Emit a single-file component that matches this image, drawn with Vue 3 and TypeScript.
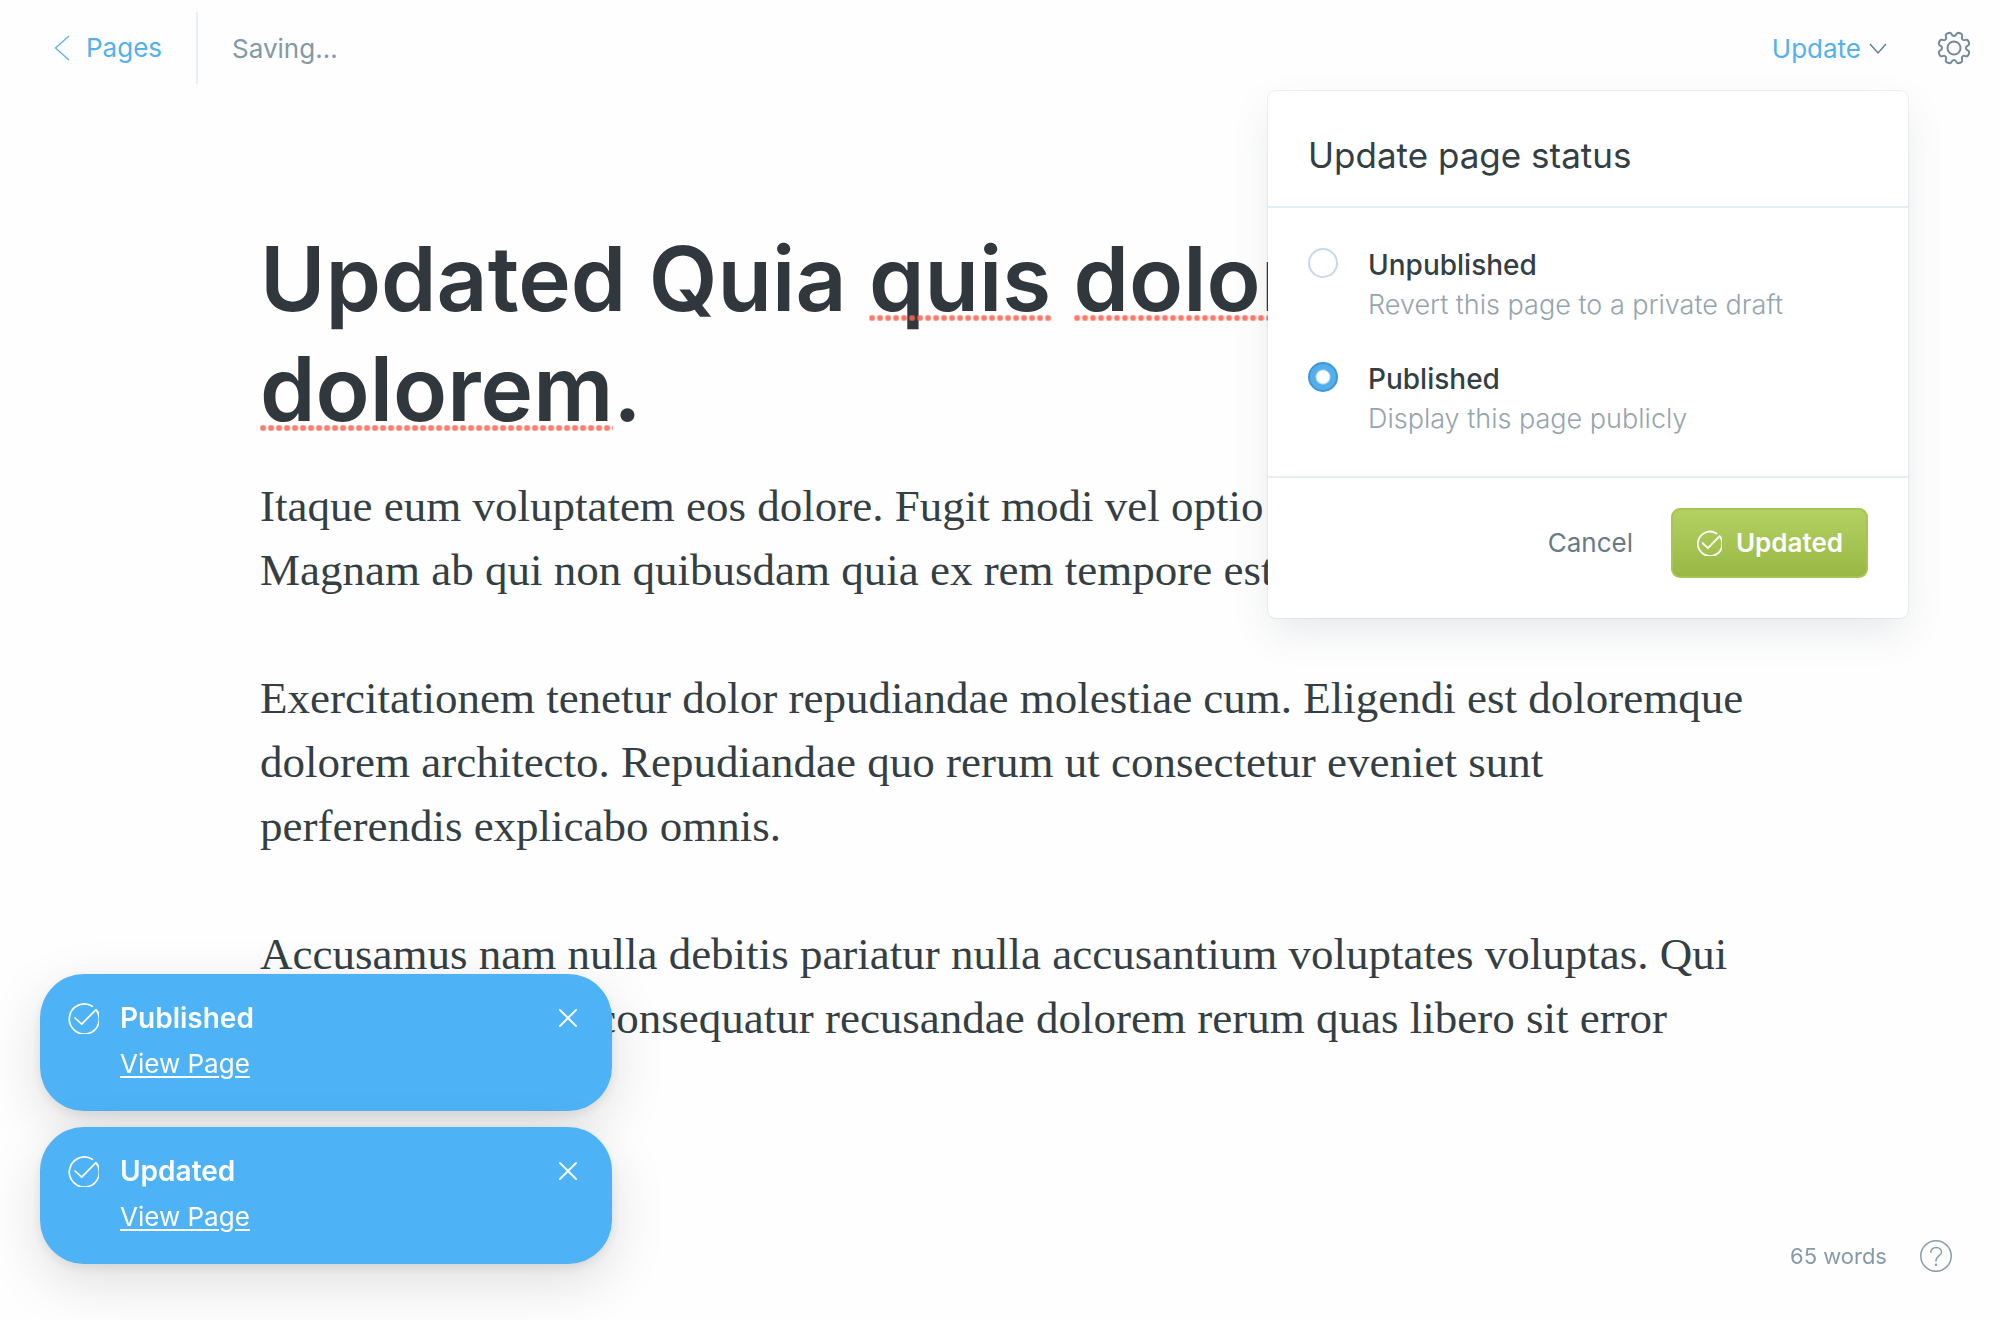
<script setup lang="ts">
import { ref } from 'vue'

interface StatusOption {
  value: string
  label: string
  hint: string
}

interface Toast {
  id: number
  title: string
}

const status = ref('published')

const options: StatusOption[] = [
  { value: 'unpublished', label: 'Unpublished', hint: 'Revert this page to a private draft' },
  { value: 'published', label: 'Published', hint: 'Display this page publicly' },
]

const toasts = ref<Toast[]>([
  { id: 1, title: 'Published' },
  { id: 2, title: 'Updated' },
])

const paragraphs: string[] = [
  'Itaque eum voluptatem eos dolore. Fugit modi vel optio aut.\nMagnam ab qui non quibusdam quia ex rem tempore est.',
  'Exercitationem tenetur dolor repudiandae molestiae cum. Eligendi est doloremque\ndolorem architecto. Repudiandae quo rerum ut consectetur eveniet sunt\nperferendis explicabo omnis.',
  'Accusamus nam nulla debitis pariatur nulla accusantium voluptates voluptas. Qui\nvoluptas nihil quo consequatur recusandae dolorem rerum quas libero sit error',
]

function dismiss(id: number): void {
  toasts.value = toasts.value.filter((t) => t.id !== id)
}

/* Eight-toothed cog outline, smoothed through the midpoints of its control points. */
function cogPath(): string {
  const pts: [number, number][] = []
  const at = (deg: number, r: number): [number, number] => {
    const a = (deg * Math.PI) / 180
    return [16 + r * Math.sin(a), 16 - r * Math.cos(a)]
  }
  for (let k = 0; k < 8; k++) {
    const mid = 22.5 + 45 * k
    pts.push(at(mid - 11, 15.6), at(mid - 3, 16), at(mid + 3, 16), at(mid + 11, 15.6))
    pts.push(at(mid + 15, 12.4), at(mid + 22.5, 12), at(mid + 30, 12.4))
  }
  const half = (a: [number, number], b: [number, number]) =>
    `${((a[0] + b[0]) / 2).toFixed(2)} ${((a[1] + b[1]) / 2).toFixed(2)}`
  let d = `M${half(pts[pts.length - 1], pts[0])}`
  pts.forEach((p, i) => {
    d += `Q${p[0].toFixed(2)} ${p[1].toFixed(2)} ${half(p, pts[(i + 1) % pts.length])}`
  })
  return d + 'Z'
}

const cog = cogPath()
</script>

<template>
  <div class="editor">
    <header class="bar">
      <nav class="bar-left">
        <a class="back" href="#pages">
          <svg width="16" height="26" viewBox="0 0 16 26" aria-hidden="true">
            <path d="M15 1 1.500 13 15 25" fill="none" stroke="currentColor" stroke-width="1.300" />
          </svg>
          <span>Pages</span>
        </a>
        <span class="saving">Saving...</span>
      </nav>
      <div class="bar-right">
        <div class="publish">
          <button class="trigger" type="button" aria-haspopup="dialog" aria-expanded="true">
            <span>Update</span>
            <svg width="18" height="12" viewBox="0 0 18 12" aria-hidden="true">
              <path d="M1 1 9 10 17 1" fill="none" stroke="#5b7d95" stroke-width="1.400" />
            </svg>
          </button>
          <section class="menu" role="dialog" aria-labelledby="menu-title">
            <h2 id="menu-title" class="menu-title">Update page status</h2>
            <div class="options">
              <div v-for="o in options" :key="o.value" class="option">
                <input :id="o.value" v-model="status" type="radio" name="status" :value="o.value" />
                <label :for="o.value">
                  <span class="label">{{ o.label }}</span>
                  <span class="hint">{{ o.hint }}</span>
                </label>
              </div>
            </div>
            <div class="actions">
              <button class="cancel" type="button">Cancel</button>
              <button class="confirm" type="button">
                <svg width="26" height="26" viewBox="0 0 32 32" aria-hidden="true">
                  <path
                    d="M8 16 14.700 22.200 29 7.600A15 15 0 1 1 25.300 4.300"
                    fill="none"
                    stroke="currentColor"
                    stroke-width="2.200"
                    stroke-linecap="round"
                    stroke-linejoin="round"
                  />
                </svg>
                <span>Updated</span>
              </button>
            </div>
          </section>
        </div>
        <button class="icon-button" type="button" aria-label="Settings">
          <svg width="34" height="34" viewBox="-1 -1 34 34" aria-hidden="true">
            <g fill="none" stroke="currentColor" stroke-width="2">
              <path :d="cog" />
              <circle cx="16" cy="16" r="6.500" />
            </g>
          </svg>
        </button>
      </div>
    </header>

    <main class="content">
      <h1>
        Updated Quia <span class="misspelt">quis</span> <span class="misspelt">dolorem</span><br />
        <span class="misspelt">dolorem</span>.
      </h1>
      <p v-for="(text, i) in paragraphs" :key="i">{{ text }}</p>
    </main>

    <aside class="toasts">
      <article v-for="t in toasts" :key="t.id" class="toast">
        <svg class="toast-icon" width="32" height="32" viewBox="0 0 32 32" aria-hidden="true">
          <path
            d="M8 16 14.700 22.200 29 7.600A15 15 0 1 1 25.300 4.300"
            fill="none"
            stroke="currentColor"
            stroke-width="1.700"
            stroke-linecap="round"
            stroke-linejoin="round"
          />
        </svg>
        <div class="toast-body">
          <strong>{{ t.title }}</strong>
          <a href="#view">View Page</a>
        </div>
        <button class="close" type="button" aria-label="Close" @click="dismiss(t.id)">
          <svg width="18" height="18" viewBox="0 0 18 18" aria-hidden="true">
            <path d="M1 1 17 17M17 1 1 17" stroke="currentColor" stroke-width="1.800" stroke-linecap="round" />
          </svg>
        </button>
      </article>
    </aside>

    <footer class="foot">
      <span>65 words</span>
      <a href="#help" aria-label="Help">
        <svg width="32" height="32" viewBox="0 0 32 32" aria-hidden="true">
          <circle cx="16" cy="16" r="15.200" fill="none" stroke="currentColor" stroke-width="1.500" />
          <path
            d="M10.700 12.800C10.700 9.500 13 7.400 16.200 7.400S21.500 9.500 21.500 12.200C21.500 16 16 16 16 20.500V21.500"
            fill="none"
            stroke="currentColor"
            stroke-width="1.500"
          />
          <circle cx="16" cy="24.800" r="1.200" fill="currentColor" />
        </svg>
      </a>
    </footer>
  </div>
</template>

<style>
body {
  margin: 0;
  background: #fefefe;
}
</style>

<style scoped>
.editor {
  min-height: 100vh;
  font-family: Inter, 'Liberation Sans', sans-serif;
  font-size: 26px;
  line-height: 32px;
  color: #343f44;
}

button {
  font: inherit;
  color: inherit;
  border: 0;
  padding: 0;
  background: none;
  cursor: pointer;
}

svg {
  display: block;
  flex: none;
}

.bar {
  display: flex;
  justify-content: space-between;
  align-items: center;
  height: 96px;
  padding: 0 29px 0 54px;
}

.bar-left,
.bar-right,
.back,
.trigger {
  display: flex;
  align-items: center;
}

.back {
  gap: 16px;
  height: 72px;
  padding-right: 34px;
  border-right: 2px solid #e5eff5;
  color: #55b1ee;
  text-decoration: none;
}

.saving {
  margin-left: 34px;
  padding-top: 2px;
  color: #8399a6;
}

.bar-right {
  gap: 50px;
}

.publish {
  position: relative;
}

.trigger {
  gap: 8px;
  padding-top: 2px;
  color: #55b1ee;
}

.menu {
  position: absolute;
  top: 60px;
  right: -21px;
  z-index: 2;
  width: 640px;
  border-radius: 8px;
  background: #fff;
  box-shadow:
    0 0 0 1px rgba(60, 70, 80, 0.07),
    0 16px 40px -4px rgba(60, 75, 90, 0.13);
}

.menu-title {
  margin: 0;
  padding: 44px 40px 31px;
  border-bottom: 2px solid #e3eff3;
  font-size: 35px;
  line-height: 40px;
  font-weight: 400;
}

.options {
  display: flex;
  flex-direction: column;
  gap: 34px;
  padding: 37px 40px;
}

.option {
  display: flex;
  gap: 30px;
}

.option input {
  appearance: none;
  flex: none;
  width: 30px;
  height: 30px;
  margin: 3px 0 0;
  border: 2px solid #c5dae7;
  border-radius: 50%;
  background: #fff;
}

.option input:checked {
  border-color: #3c98dc;
  background: radial-gradient(circle, #fff 6px, #54aeea 8px);
}

.option label {
  display: flex;
  flex-direction: column;
}

.label {
  font-size: 28px;
  line-height: 40px;
  font-weight: 500;
}

.hint {
  font-size: 27px;
  line-height: 40px;
  font-weight: 300;
  color: #94a5ae;
}

.actions {
  display: flex;
  justify-content: flex-end;
  align-items: center;
  gap: 38px;
  padding: 30px 40px 40px;
  border-top: 2px solid #e5eff5;
}

.cancel {
  color: #667b87;
}

.confirm {
  display: flex;
  align-items: center;
  gap: 14px;
  height: 70px;
  padding: 0 23px;
  border: 2px solid #a6c651;
  border-radius: 9px;
  background: linear-gradient(#b3d163, #98b843);
  color: #fff;
  font-weight: 600;
}

.icon-button {
  color: #738a97;
}

.content {
  max-width: 1480px;
  margin: 0 auto;
  padding: 128px 60px 0;
}

h1 {
  margin: 0 0 30px;
  font-size: 89px;
  line-height: 110px;
  font-weight: 600;
  color: #30383e;
  white-space: nowrap;
}

.misspelt {
  position: relative;
}

.misspelt::after {
  content: '';
  position: absolute;
  left: 0;
  right: 0;
  bottom: 11px;
  height: 6px;
  background: radial-gradient(circle at 3px 3px, #ff6352 2px, transparent 4px) 0 0 / 8px 6px;
  opacity: 0.85;
}

p {
  margin: 0 0 64px;
  font-family: 'Liberation Serif', serif;
  font-size: 45px;
  line-height: 64px;
  white-space: pre;
}

.toasts {
  position: fixed;
  left: 40px;
  bottom: 56px;
  z-index: 3;
  display: flex;
  flex-direction: column;
  gap: 16px;
  width: 572px;
}

.toast {
  display: flex;
  align-items: flex-start;
  gap: 21px;
  padding: 28px 35px 31px 27px;
  border-radius: 44px;
  background: #4eb2f6;
  color: #fff;
  box-shadow:
    0 4px 12px rgba(0, 0, 0, 0.08),
    0 18px 56px rgba(0, 0, 0, 0.13);
}

.toast-body {
  display: flex;
  flex: 1;
  flex-direction: column;
  align-items: flex-start;
  gap: 14px;
}

.toast-body strong {
  font-size: 28px;
  font-weight: 600;
}

.toast-body a {
  color: inherit;
  text-decoration-thickness: 2px;
  text-underline-offset: 3px;
}

.close {
  margin-top: 7px;
}

.foot {
  position: fixed;
  right: 48px;
  bottom: 48px;
  display: flex;
  align-items: center;
  gap: 33px;
  font-size: 22px;
  color: #869ba8;
}

.foot a {
  color: inherit;
}
</style>
